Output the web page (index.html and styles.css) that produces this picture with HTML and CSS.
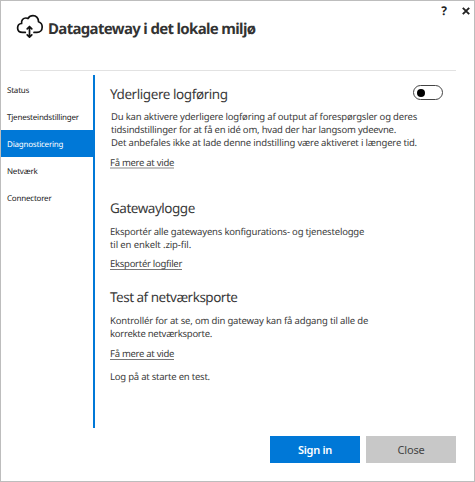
FILE: index.html
```
<!DOCTYPE html>
<html lang="da">
<head>
<meta charset="utf-8">
<title>Datagateway i det lokale miljø</title>
<link rel="stylesheet" href="styles.css">
</head>
<body>
<div class="window">
  <header class="header">
    <svg class="cloud" viewBox="0 0 28 26" width="28" height="26" fill="none" stroke="#111" stroke-width="1.7" stroke-linecap="round" stroke-linejoin="round">
      <path d="M9.3 18.4H6.600C3.600 18.400 1.600 16.600 1.600 14c0-2.500 1.800-4.300 4-4.500C5.100 6.200 7.200 4 9.900 4c.8 0 1.500.2 2.100.5C13.100 2.700 14.900 1.700 17 1.700c3.300 0 5.600 2.500 5.500 6 2.200.7 3.700 2.700 3.700 5.200 0 3.200-2.200 5.500-5.200 5.500h-3"/>
      <path d="M13.500 13.200v9.300M11.200 14.800l2.300-2.300 2.300 2.300M11.200 20.900l2.300 2.300 2.300-2.300"/>
    </svg>
    <h1 class="title">Datagateway i det lokale miljø</h1>
    <div class="controls">
      <span class="help">?</span>
      <svg class="close" viewBox="0 0 8 8" width="8" height="8" stroke="#222" stroke-width="1.9"><path d="M.8.8l6.400 6.400M7.200.8L.8 7.200"/></svg>
    </div>
  </header>
  <div class="divider"></div>
  <div class="main">
    <nav class="nav">
      <a class="item">Status</a>
      <a class="item">Tjenesteindstillinger</a>
      <a class="item active">Diagnosticering</a>
      <a class="item">Netværk</a>
      <a class="item">Connectorer</a>
    </nav>
    <main class="content">
      <section class="section logging">
        <div class="heading-row"><h2 class="h-logging">Yderligere logføring</h2><span class="toggle"><i></i></span></div>
        <p class="indent"><span class="a1">Du kan aktivere yderligere logføring af output af forespørgsler og deres</span><span class="a2">tidsindstillinger for at få en idé om, hvad der har langsom ydeevne.</span><span class="a3">Det anbefales ikke at lade denne indstilling være aktiveret i længere tid.</span></p>
        <a class="link soft">Få mere at vide</a>
      </section>
      <section class="section logs">
        <h2 class="h-logs">Gatewaylogge</h2>
        <p><span class="b1">Eksportér alle gatewayens konfigurations- og tjenestelogge</span><span class="b2">til en enkelt .zip-fil.</span></p>
        <a class="link export">Eksportér logfiler</a>
      </section>
      <section class="section ports">
        <h2 class="h-ports">Test af netværksporte</h2>
        <p><span class="c1">Kontrollér for at se, om din gateway kan få adgang til alle de</span><span class="c2">korrekte netværksporte.</span></p>
        <a class="link">Få mere at vide</a>
        <p class="note"><span class="c3">Log på at starte en test.</span></p>
      </section>
    </main>
  </div>
  <footer class="footer">
    <button class="btn primary">Sign in</button>
    <button class="btn">Close</button>
  </footer>
</div>
</body>
</html>
```
FILE: styles.css
```
* { box-sizing: border-box; }
body { margin: 0; background: #fff; font-family: "Noto Sans", "Open Sans", sans-serif; color: #3a3a3a; text-rendering: geometricPrecision; }
h1, h2, p { margin: 0; font-weight: 400; }
.window { width: 475px; height: 482px; border: 1px solid #bdbdbd; display: flex; flex-direction: column; }
.header { height: 69px; margin: 0 18px 0 15px; display: flex; align-items: flex-start; flex: none; }
.divider { height: 1px; margin: 0 18px 0 19px; background: #e2e2e2; flex: none; }
.cloud { margin-top: 13px; flex: none; }
.title { font-size: 15px; font-weight: 700; line-height: 22px; margin: 17px 0 0 4px; color: #333; white-space: nowrap; letter-spacing: -0.67px; }
.controls { display: flex; align-items: center; gap: 15px; margin: 2px -14px 0 auto; height: 15px; color: #222; }
.help { font-size: 12px; font-weight: 700; line-height: 15px; }
.main { display: flex; height: 353px; margin-top: 4px; flex: none; }
.nav { width: 94px; border-right: 2px solid #0078d7; padding-top: 1px; flex: none; }
.item { display: block; height: 27px; line-height: 30px; padding-left: 6px; font-size: 8px; letter-spacing: -0.21px; white-space: nowrap; color: #222; }
.active { background: #0078d7; color: #fff; }
.content { width: 348px; padding: 9px 0 0 15px; }
h2 { font-size: 13.5px; line-height: 20px; height: 20px; white-space: nowrap; }
.h-logging { letter-spacing: -0.43px; }
.h-logs { letter-spacing: -0.48px; }
.h-ports { letter-spacing: -0.5px; }
.heading-row { display: flex; justify-content: space-between; }
.toggle { width: 30px; height: 15px; border: 1px solid #444; border-radius: 8px; margin-top: 1px; padding: 2.5px 3px; }
.toggle i { display: block; width: 8px; height: 8px; border-radius: 50%; background: #000; }
p { margin-top: 7px; font-size: 9.5px; line-height: 13px; }
p span { display: block; width: max-content; white-space: nowrap; }
.a1 { letter-spacing: -0.19px; }
.a2 { letter-spacing: -0.21px; }
.a3 { letter-spacing: -0.17px; }
.b1 { letter-spacing: -0.19px; }
.b2 { letter-spacing: -0.11px; }
.c1 { letter-spacing: -0.17px; }
.c2 { letter-spacing: -0.27px; }
.c3 { letter-spacing: -0.22px; }
.indent { padding-left: 1px; margin-top: 6px; }
.link { display: block; width: max-content; font-size: 9.5px; letter-spacing: -0.28px; line-height: 13px; height: 13px; margin-top: 7px; border-bottom: 1px solid #777; white-space: nowrap; }
.soft { border-bottom: 2px solid #c4c4c4; height: 13px; }
.export { margin-top: 6px; }
.section { height: 89px; }
.logging { height: 114px; }
.note { margin-top: 10px; }
.footer { display: flex; justify-content: flex-end; gap: 6px; margin: 8px 18px 0 0; }
.btn { width: 90px; height: 27px; border: 0; padding: 0; background: #c8c8c8; color: #444; font: 11px/28px "Noto Sans", sans-serif; letter-spacing: -0.2px; }
.primary { background: #0078d7; color: #fff; font-weight: 600; letter-spacing: -0.3px; }
```
